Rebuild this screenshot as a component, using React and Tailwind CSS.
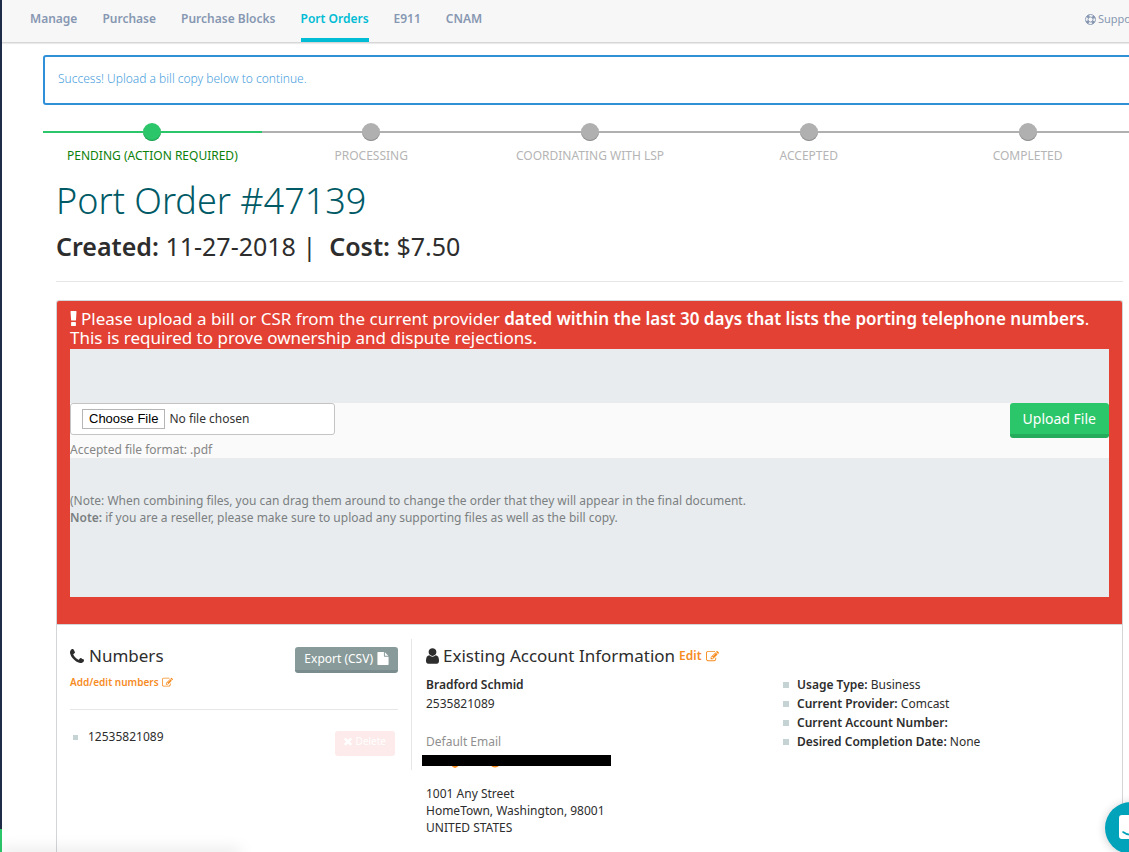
import React from "react";

const PATHS = {
  phone:
    "M1408 1240q0 27-10 70.5t-21 68.5q-21 50-122 106-94 51-186 51-27 0-53-3.5t-57.5-12.5-47-14.5-55.5-20.5-49-18q-98-35-175-83-127-79-264-216t-216-264q-48-77-83-175-3-9-18-49t-20.5-55.5-14.5-47-12.5-57.5-3.5-53q0-92 51-186 56-101 106-122 25-11 68.5-21t70.5-10q14 0 21 3 18 6 53 76 11 19 30 54t35 63.5 31 53.5q3 4 17.5 25t21.5 35.5 7 28.5q0 20-28.5 50t-62 55-62 53-28.5 46q0 9 5 22.5t8.5 20.5 14 24 11.5 19q76 137 174 235t235 174q2 1 19 11.5t24 14 20.5 8.5 22.5 5q18 0 46-28.5t53-62 55-62 50-28.5q14 0 28.5 7t35.5 21.5 25 17.5q25 15 53.5 31t63.5 35 54 30q70 35 76 53 3 7 3 21z",
  user: "M1536 1399q0 109-62.5 187t-150.5 78h-854q-88 0-150.5-78t-62.5-187q0-85 8.5-160.5t31.5-152 58.5-131 94-89 134.5-34.5q131 128 313 128t313-128q76 0 134.5 34.5t94 89 58.5 131 31.5 152 8.5 160.5zm-256-887q0 159-112.5 271.5t-271.5 112.5-271.5-112.5-112.5-271.5 112.5-271.5 271.5-112.5 271.5 112.5 112.5 271.5z",
  edit: "M888 1184l116-116-152-152-116 116v56h96v96h56zm440-720q-16-16-33 1l-350 350q-17 17-1 33t33-1l350-350q17-17 1-33zm80 594v190q0 119-84.5 203.5t-203.5 84.5h-832q-119 0-203.5-84.5t-84.5-203.5v-832q0-119 84.5-203.5t203.5-84.5h832q63 0 117 25 15 7 18 23 3 17-9 29l-49 49q-14 14-32 8-23-6-45-6h-832q-66 0-113 47t-47 113v832q0 66 47 113t113 47h832q66 0 113-47t47-113v-126q0-13 9-22l64-64q15-15 35-7t20 29zm-96-738l288 288-672 672h-288v-288zm444 132l-92 92-288-288 92-92q28-28 68-28t68 28l152 152q28 28 28 68t-28 68z",
  file: "M1152 512v-472q22 14 36 28l408 408q14 14 28 36h-472zm-128 32q0 40 28 68t68 28h544v1056q0 40-28 68t-68 28h-1344q-40 0-68-28t-28-68v-1600q0-40 28-68t68-28h800v544z",
  times:
    "M1490 1322q0 40-28 68l-136 136q-28 28-68 28t-68-28l-294-294-294 294q-28 28-68 28t-68-28l-136-136q-28-28-28-68t28-68l294-294-294-294q-28-28-28-68t28-68l136-136q28-28 68-28t68 28l294 294 294-294q28-28 68-28t68 28l136 136q28 28 28 68t-28 68l-294 294 294 294q28 28 28 68z",
};

function Icon({ name, viewBox = "0 0 1792 1792", className }) {
  return (
    <svg viewBox={viewBox} fill="currentColor" aria-hidden="true" className={className}>
      <path d={PATHS[name]} />
    </svg>
  );
}

function LifeRing() {
  return (
    <svg viewBox="0 0 22 22" fill="none" stroke="currentColor" aria-hidden="true" className="size-[11px]">
      <circle cx="11" cy="11" r="10" strokeWidth="1.8" />
      <circle cx="11" cy="11" r="5" strokeWidth="1.8" />
      <circle cx="11" cy="11" r="7.5" strokeWidth="5" strokeDasharray="5.4 6.38" strokeDashoffset="-3.2" />
    </svg>
  );
}

const TABS = ["Manage", "Purchase", "Purchase Blocks", "Port Orders", "E911", "CNAM"];
const STEPS = ["Pending (Action Required)", "Processing", "Coordinating with LSP", "Accepted", "Completed"];
const DETAILS = [
  ["Usage Type:", "Business"],
  ["Current Provider:", "Comcast"],
  ["Current Account Number:", ""],
  ["Desired Completion Date:", "None"],
];

function Header() {
  return (
    <header className="flex h-[43px] shrink-0 overflow-hidden border-b border-[#d6d6d6] bg-[#f7f7f7] pl-7 text-[#8797b2] shadow-[0_1px_1px_rgba(0,0,0,0.08)]">
      <nav className="flex gap-[25px]">
        {TABS.map((tab) => (
          <a
            key={tab}
            href="#"
            className={
              tab === "Port Orders"
                ? "border-b-4 border-[#00bcd4] pt-2.5 text-[12px] leading-[18px] font-semibold whitespace-nowrap text-[#00bcd4]"
                : "pt-2.5 text-[12px] leading-[18px] font-semibold whitespace-nowrap"
            }
          >
            {tab}
          </a>
        ))}
      </nav>
      <a href="#" className="ml-auto flex w-11 items-center gap-0.5 pb-1 text-[11px] whitespace-nowrap">
        <span className="shrink-0">
          <LifeRing />
        </span>
        Support
      </a>
    </header>
  );
}

function Stepper() {
  return (
    <ol className="mt-[18px] grid grid-cols-5 text-center text-[12px] leading-4 uppercase">
      {STEPS.map((step, i) => (
        <li key={step} className={i === 0 ? "text-[#0b810b]" : "text-[#b5b5b5]"}>
          <div className="flex items-center">
            <span className={i === 0 ? "h-0.5 flex-1 bg-[#2bc669]" : "h-0.5 flex-1 bg-[#b0b0b0]"} />
            <span
              className={
                i === 0
                  ? "size-[18px] rounded-full bg-[#2bc669] shadow-[inset_0_-1px_0_#239c54]"
                  : "size-[18px] rounded-full bg-[#b0b0b0] shadow-[inset_0_-1px_0_#8e8e8e]"
              }
            />
            <span className={i === 0 ? "h-0.5 flex-1 bg-[#2bc669]" : "h-0.5 flex-1 bg-[#b0b0b0]"} />
          </div>
          <div className="mt-[7px] whitespace-nowrap">{step}</div>
        </li>
      ))}
    </ol>
  );
}

function UploadSection() {
  return (
    <section className="border-b border-[#d3d6d8] bg-[#e44135] px-[13px] pt-2 pb-[27px]">
      <h3 className="text-[17px] leading-[19px] text-white">
        <svg viewBox="0 0 6 15" fill="currentColor" aria-hidden="true" className="mr-1 inline-block h-[15px] w-[7px] align-[-1px]">
          <path d="M.6 0h4.800q.6 0 .6.6l-.5 8.300q0 .6-.6.6H1.200q-.6 0-.6-.6L0 .6Q0 0 .6 0zM1.200 11h3.600q.6 0 .6.6v2.800q0 .6-.6.6H1.200q-.6 0-.6-.6v-2.800q0-.6.6-.6z" />
        </svg>
        Please upload a bill or CSR from the current provider{" "}
        <strong className="font-semibold">dated within the last 30 days that lists the porting telephone numbers</strong>.
        <br />
        This is required to prove ownership and dispute rejections.
      </h3>
      <div className="mt-0.5 bg-[#e8ecef] pt-[54px] pb-[71px] text-[12px] text-[#7b7f81]">
        <form className="flex items-start justify-between bg-[#fafafa]" onSubmit={(e) => e.preventDefault()}>
          <div>
            <input
              id="bill"
              type="file"
              accept=".pdf"
              className="block h-8 w-[265px] rounded-[3px] border border-[#c4c4c4] bg-white px-[11px] py-[5px] text-[12px] leading-5 text-[#333] file:mr-1 file:h-5 file:border file:border-solid file:border-[#b5b5b5] file:bg-white file:px-1.5 file:font-['Liberation_Sans',sans-serif] file:text-[13px] file:leading-4 file:text-black"
            />
            <label htmlFor="bill" className="mt-[7px] block pb-px leading-[15px] text-[#868686]">
              Accepted file format: .pdf
            </label>
          </div>
          <button
            type="submit"
            className="h-[35px] rounded-[3px] border-b-4 border-[#24ab5b] bg-[#2bc669] px-[13px] text-[14px] leading-5 text-white"
          >
            Upload File
          </button>
        </form>
        <p className="mt-[34px] leading-[17px]">
          (Note: When combining files, you can drag them around to change the order that they will appear in the final
          document.
          <br />
          <strong className="font-semibold">Note:</strong> if you are a reseller, please make sure to upload any supporting
          files as well as the bill copy.
        </p>
      </div>
    </section>
  );
}

function Numbers() {
  return (
    <section className="pr-[13px]">
      <div className="flex items-start justify-between">
        <div>
          <h3 className="flex items-center gap-[5px] pt-[5px] text-[17px] leading-6">
            <Icon name="phone" viewBox="0 128 1408 1408" className="size-3.5" />
            Numbers
          </h3>
          <a href="#" className="mt-1.5 flex items-center gap-[3px] text-[10px] leading-4 font-semibold text-[#f68b1f]">
            Add/edit numbers
            <Icon name="edit" className="size-[11px]" />
          </a>
        </div>
        <button
          type="button"
          className="mt-2 flex h-[26px] items-center gap-1 rounded-[3px] border-b-[3px] border-[#7a8c8d] bg-[#889a99] px-[9px] text-[12px] text-white"
        >
          Export (CSV)
          <Icon name="file" viewBox="128 0 1536 1792" className="h-[13px] w-3" />
        </button>
      </div>
      <div className="mt-[19px] flex items-start justify-between border-t border-[#e6e6e6] pt-[21px] pr-[3px] pl-[3px]">
        <div className="flex items-center">
          <span className="mr-2.5 size-[5px] bg-[#c5d3d4]" />
          <span className="text-[12px] leading-3">12535821089</span>
        </div>
        <button
          type="button"
          disabled
          className="flex h-[25px] items-center gap-1 rounded-[3px] bg-[#fcebea] px-[9px] pb-1 text-[10px] text-white"
        >
          <Icon name="times" viewBox="280 450 1232 1130" className="size-2" />
          Delete
        </button>
      </div>
    </section>
  );
}

function Account() {
  return (
    <section className="border-l border-[#e6e6e6] pl-[14px] text-[12px]">
      <h3 className="flex items-center gap-1 pt-[5px] text-[17px] leading-6 whitespace-nowrap">
        <Icon name="user" viewBox="256 128 1280 1536" className="h-4 w-[13px]" />
        Existing Account Information
        <a href="#" className="flex items-center gap-1 text-[12px] leading-6 font-semibold text-[#f68b1f]">
          Edit
          <Icon name="edit" className="size-[13px]" />
        </a>
      </h3>
      <p className="mt-[7px] leading-[19px] font-semibold">Bradford Schmid</p>
      <p className="leading-[19px]">2535821089</p>
      <p className="mt-[19px] leading-[19px] text-[#8f8f8f]">Default Email</p>
      <svg viewBox="0 0 189 15" role="img" aria-label="Email hidden" className="-ml-1 mt-1 h-[15px] w-[189px]">
        <path d="M29 10q4 6 8 0M68 10q5 5 10 0" fill="#f68b1f" />
        <path d="M0 0H189V11H0z" />
      </svg>
    </section>
  );
}

export default function App() {
  return (
    <div className="flex min-h-screen overflow-hidden bg-white font-['Noto_Sans',sans-serif] text-[#2d2d2d]">
      <aside className="flex w-0.5 shrink-0 flex-col bg-[#1e2c47]">
        <div className="mt-auto h-[23px] bg-[#2bc669]" />
      </aside>
      <div className="flex min-w-0 flex-1 flex-col">
        <Header />
        <main className="-mr-2 flex flex-1 flex-col pt-3 pl-[41px]">
          <div
            role="status"
            className="h-[50px] rounded-[3px] border-2 border-[#2f8fd8] px-[13px] py-[13px] text-[12px] leading-[18px] font-light text-[#4aa0dd]"
          >
            Success! Upload a bill copy below to continue.
          </div>
          <Stepper />
          <div className="flex flex-1 flex-col px-[13px] pr-3.5">
            <h1 className="mt-[14px] text-[36px] leading-[46px] font-light text-[#005a66]">Port Order #47139</h1>
            <h2 className="mt-1 text-[25px] leading-9">
              <strong className="font-semibold">Created:</strong> 11-27-2018 |&nbsp;{" "}
              <strong className="font-semibold">Cost:</strong> $7.50
            </h2>
            <hr className="mt-[17px] border-[#e6e6e6]" />
            <div className="mt-[18px] flex-1 overflow-hidden rounded-t-[3px] border border-b-0 border-[#d3d6d8]">
              <UploadSection />
              <div className="grid grid-cols-[341px_357px_1fr] px-[13px] pt-3.5">
                <Numbers />
                <Account />
                <ul className="pt-[36px] pl-[15px] text-[12px] leading-[19px]">
                  {DETAILS.map(([label, value]) => (
                    <li key={label} className="flex items-center">
                      <span className="mr-2 size-1.5 bg-[#c5d3d4]" />
                      <span>
                        <strong className="font-semibold">{label}</strong> {value}
                      </span>
                    </li>
                  ))}
                </ul>
                <address className="col-start-2 pt-[15px] pl-[15px] text-[12px] leading-[17px] not-italic">
                  1001 Any Street
                  <br />
                  HomeTown, Washington, 98001
                  <br />
                  UNITED STATES
                </address>
              </div>
            </div>
          </div>
        </main>
      </div>
      <div className="fixed -bottom-1 left-0 h-1 w-60 shadow-[0_0_16px_rgba(0,0,0,0.25)]" />
      <button
        type="button"
        aria-label="Open chat"
        className="fixed -right-7 -bottom-0.5 size-[52px] rounded-full bg-[#00a3ba] pl-3.5 shadow-[0_1px_10px_rgba(0,0,0,0.2)]"
      >
        <svg viewBox="0 0 24 28" className="h-7 w-6">
          <path d="M3 1h18q3 0 3 3v24l-5-3H3q-3 0-3-3V4q0-3 3-3z" fill="#fff" />
          <path d="M4 18q8 6 16 0" fill="none" stroke="#00a3ba" strokeWidth="1.6" strokeLinecap="round" />
        </svg>
      </button>
    </div>
  );
}
